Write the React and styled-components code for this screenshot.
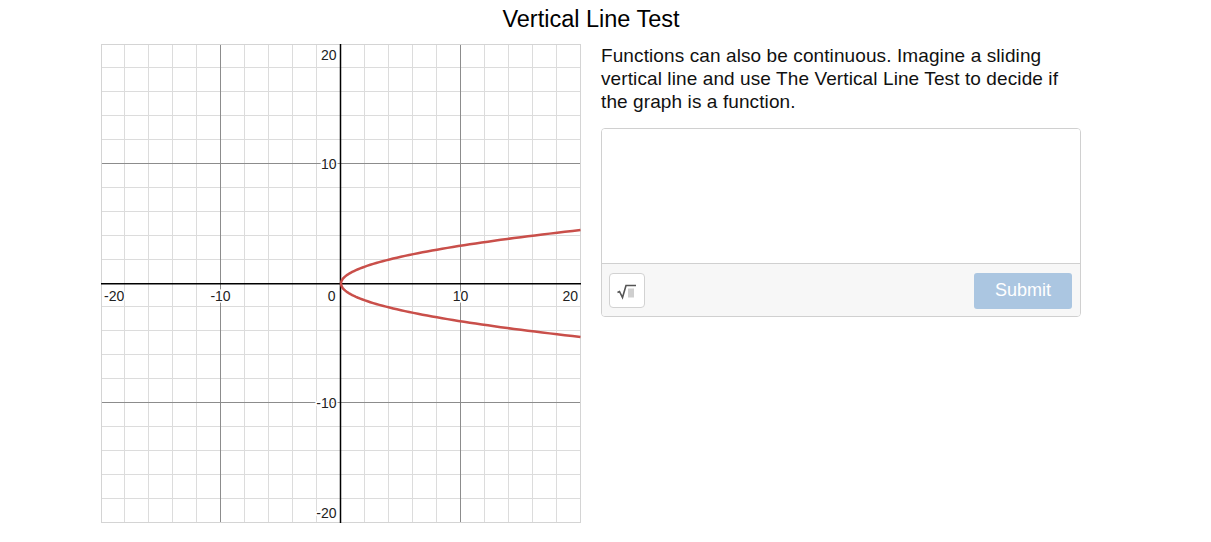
import React from 'react';
import styled, { createGlobalStyle } from 'styled-components';

const GlobalStyle = createGlobalStyle`
  html, body {
    margin: 0;
    padding: 0;
    background: #fff;
  }
  body {
    font-family: "Liberation Sans", Arial, sans-serif;
    color: #000;
  }
`;

const Page = styled.div`
  width: 980px;
  margin-left: 101px;
  padding-top: 5px;
`;

const Title = styled.h1`
  margin: 0;
  font-size: 23.5px;
  font-weight: normal;
  text-align: center;
  line-height: 28px;
  height: 39px;
`;

const Content = styled.div`
  display: flex;
  gap: 20px;
  align-items: flex-start;
`;

const GraphBox = styled.div`
  width: 480px;
  height: 479px;
  flex: none;
`;

const Panel = styled.div`
  width: 480px;
  display: flex;
  flex-direction: column;
`;

const Prompt = styled.p`
  margin: 0;
  font-size: 19px;
  letter-spacing: 0.1px;
  line-height: 23px;
  color: #111;
`;

const AnswerBox = styled.div`
  margin-top: 15px;
  border: 1px solid #d0d0d0;
  border-radius: 4px;
  overflow: hidden;
`;

const AnswerArea = styled.div`
  height: 134px;
  background: #fff;
  border-bottom: 1px solid #d0d0d0;
`;

const Toolbar = styled.div`
  height: 52px;
  background: #f7f7f7;
  display: flex;
  align-items: center;
  justify-content: space-between;
  padding: 0 8px 0 7px;
`;

const IconButton = styled.button`
  width: 36px;
  height: 35px;
  padding: 0;
  border: 1px solid #d2d2d2;
  border-radius: 4px;
  background: #fff;
  display: flex;
  align-items: center;
  justify-content: center;
  margin-top: 1px;
`;

const SubmitButton = styled.button`
  width: 98px;
  height: 36px;
  border: none;
  border-radius: 3px;
  background: #abc6e1;
  color: #fff;
  font-family: "Liberation Sans", Arial, sans-serif;
  font-size: 18px;
  padding: 0;
  margin-top: 1px;
`;

const W = 480;
const H = 479;
const sx = (x) => Math.floor((x + 20) * 11.975) + 0.5;
const sy = (y) => Math.floor((20 - y) * 11.95) + 0.5;

const ticks = [];
for (let v = -20; v <= 20; v += 2) ticks.push(v);

const Label = ({ x, y, anchor = 'middle', children }) => (
  <text
    x={x}
    y={y}
    textAnchor={anchor}
    fontSize="14"
    fontFamily="Liberation Sans, Arial, sans-serif"
    fill="#222"
    stroke="#fff"
    strokeWidth="3"
    paintOrder="stroke"
  >
    {children}
  </text>
);

const Graph = () => {
  const pts = [];
  const m = Math.sqrt(20);
  for (let i = 0; i <= 120; i++) {
    const y = -m + (2 * m * i) / 120;
    pts.push(`${((y * y + 20) * 11.975 + 0.5).toFixed(2)},${((20 - y) * 11.95 + 0.5).toFixed(2)}`);
  }
  const ax = sx(0);
  const ay = sy(0);
  return (
    <svg width={W} height={H} viewBox={`0 0 ${W} ${H}`}>
      <rect x="0" y="0" width={W} height={H} fill="#fff" />
      <g shapeRendering="crispEdges">
        {ticks.filter((v) => v % 10 !== 0).map((v) => (
          <line key={`vx${v}`} x1={sx(v)} y1="0" x2={sx(v)} y2={H} stroke="#dcdcdc" strokeWidth="1" />
        ))}
        {ticks.filter((v) => v % 10 !== 0).map((v) => (
          <line key={`hy${v}`} x1="0" y1={sy(v)} x2={W} y2={sy(v)} stroke="#dcdcdc" strokeWidth="1" />
        ))}
        {[-10, 10].map((v) => (
          <line key={`mx${v}`} x1={sx(v)} y1="0" x2={sx(v)} y2={H} stroke="#8c8c8c" strokeWidth="1" />
        ))}
        {[-10, 10].map((v) => (
          <line key={`my${v}`} x1="0" y1={sy(v)} x2={W} y2={sy(v)} stroke="#8c8c8c" strokeWidth="1" />
        ))}
        <rect x="0.5" y="0.5" width={W - 1} height={H - 1} fill="none" stroke="#d4d4d4" />
      </g>
      <line x1="0" y1={ay + 0.25} x2={W} y2={ay + 0.25} stroke="#000" strokeWidth="1.5" />
      <line x1={ax} y1="0" x2={ax} y2={H} stroke="#000" strokeWidth="1.5" />

      <Label x={3} y={ay + 17} anchor="start">-20</Label>
      <Label x={sx(-10)} y={ay + 17}>-10</Label>
      <Label x={ax - 5} y={ay + 17} anchor="end">0</Label>
      <Label x={sx(10)} y={ay + 17}>10</Label>
      <Label x={W - 3} y={ay + 17} anchor="end">20</Label>

      <Label x={ax - 4} y={16} anchor="end">20</Label>
      <Label x={ax - 4} y={sy(10) + 5} anchor="end">10</Label>
      <Label x={ax - 4} y={sy(-10) + 5} anchor="end">-10</Label>
      <Label x={ax - 4} y={H - 5} anchor="end">-20</Label>

      <polyline points={pts.join(' ')} fill="none" stroke="#c94f4a" strokeWidth="2.5" strokeLinejoin="round" />
    </svg>
  );
};

const SqrtIcon = () => (
  <svg width="22" height="18" viewBox="0 0 22 18">
    <path d="M1.5 10.5 L3.5 9.5 L6.5 15.5 L10 3.5 L20 3.5" fill="none" stroke="#555" strokeWidth="1.6" strokeLinejoin="miter" />
    <rect x="12" y="6.5" width="6" height="9" fill="#cfcfcf" />
  </svg>
);

export default function App() {
  return (
    <>
      <GlobalStyle />
      <Page>
        <Title>Vertical Line Test</Title>
        <Content>
          <GraphBox>
            <Graph />
          </GraphBox>
          <Panel>
            <Prompt>
              Functions can also be continuous. Imagine a sliding vertical line and use The Vertical Line Test to decide if the graph is a function.
            </Prompt>
            <AnswerBox>
              <AnswerArea />
              <Toolbar>
                <IconButton aria-label="math input">
                  <SqrtIcon />
                </IconButton>
                <SubmitButton disabled>Submit</SubmitButton>
              </Toolbar>
            </AnswerBox>
          </Panel>
        </Content>
      </Page>
    </>
  );
}
